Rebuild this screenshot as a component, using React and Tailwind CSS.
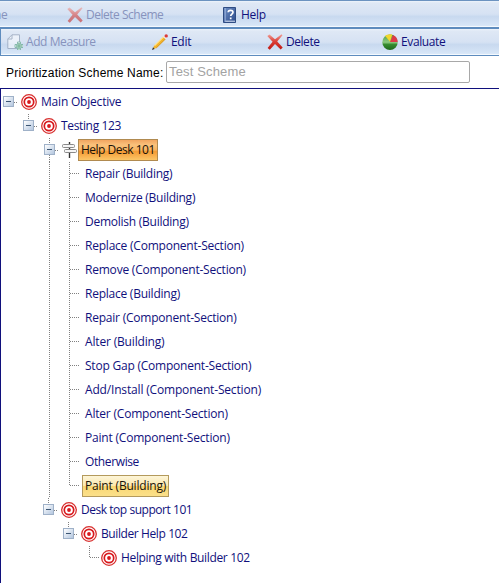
import React from "react";

const vDots = "bg-[repeating-linear-gradient(to_bottom,#808080_0px,#808080_1px,transparent_1px,transparent_2px)]";
const hDots = "bg-[repeating-linear-gradient(to_right,#808080_0px,#808080_1px,transparent_1px,transparent_2px)]";
const barFill = "bg-[linear-gradient(to_bottom,#eef4fb_0px,#dfe8f5_2px,#d6e2f3_50%,#c8d9ef_60%,#d7e6f7_94%,#f4f9fe_97%)]";

function Target() {
  return (
    <svg className="block size-4 shrink-0" viewBox="0 0 16 16">
      <circle cx="8" cy="8" r="7.3" fill="#fff" stroke="#d8302f" strokeWidth="1.3" />
      <circle cx="8" cy="8" r="4.7" fill="#fff" stroke="#d8181c" strokeWidth="1.7" />
      <circle cx="8" cy="8" r="1.9" fill="#d8181c" />
    </svg>
  );
}

function Signpost() {
  return (
    <svg className="block size-4 shrink-0" viewBox="0 0 16 16">
      <path d="M8.500 0v16" stroke="#333" strokeWidth="1.400" />
      <rect x="1.500" y="2.500" width="12" height="3" rx="1" fill="#f6f6f6" stroke="#8a8a8a" />
      <rect x="3.500" y="7.500" width="12" height="3" rx="1" fill="#f6f6f6" stroke="#8a8a8a" />
    </svg>
  );
}

function Cross() {
  return (
    <svg className="block size-4 shrink-0" viewBox="0 0 16 16">
      <defs>
        <linearGradient id="cross" x1="0" y1="0" x2="0" y2="1">
          <stop offset="0" stopColor="#f0a098" />
          <stop offset=".45" stopColor="#dc4038" />
          <stop offset="1" stopColor="#c01812" />
        </linearGradient>
      </defs>
      <path d="M.3 2 2.500.5 8 5.200 14.500.3l1 .9L10.200 7.500l5.500 6-2 2L8 10.100 2.800 15.700.6 14l5-6.300z" fill="url(#cross)" />
    </svg>
  );
}

function Book() {
  return (
    <svg className="block size-4 shrink-0" viewBox="0 0 16 16">
      <defs>
        <linearGradient id="book" x1="0" y1="0" x2="1" y2="1">
          <stop offset="0" stopColor="#6f8fc4" />
          <stop offset="1" stopColor="#2c4c8c" />
        </linearGradient>
      </defs>
      <path d="M1.500.5h12v15h-12z" fill="url(#book)" stroke="#2f4d84" />
      <path d="M3.200 1v14" stroke="#a9c0e6" strokeWidth=".8" />
      <path d="M3.500 14.200h9.500" stroke="#dfe9f8" />
      <path d="M6.200 5.300C6.200 2.700 11 2.600 11 5.200c0 1.800-2.300 1.900-2.300 3.800M8.700 10.400v1.900" fill="none" stroke="#fff" strokeWidth="1.700" />
    </svg>
  );
}

function AddPage() {
  return (
    <svg className="block size-4 shrink-0" viewBox="0 0 16 16">
      <path d="M5 .8h7.500v13.700H.8V5z" fill="#fbfdff" stroke="#7e8ea6" />
      <path d="M5 .8V5H.8" fill="none" stroke="#7e8ea6" />
      <path d="M10.500 8h3v2.500H16v3h-2.500V16h-3v-2.500H8v-3h2.500z" fill="#fff" stroke="#3d9668" strokeWidth=".9" />
      <path d="M12 9v6M9 12h6" stroke="#3f9f58" strokeWidth="1.600" />
    </svg>
  );
}

function Pencil() {
  return (
    <svg className="block size-4 shrink-0" viewBox="0 0 16 16">
      <path d="M.7 15.300 2 11.700 11.500 2.200l2.500 2.500-9.500 9.400z" fill="#f3b52c" />
      <path d="M2.600 11.600 11.800 2.600" stroke="#ffe9a0" strokeWidth="1.100" />
      <path d="M4.300 13.900 13.700 4.700" stroke="#cf8f22" strokeWidth=".8" />
      <path d="M11 2.700l1.800-1.800 2.500 2.500-1.800 1.900z" fill="#e9edf4" />
      <circle cx="14.200" cy="1.900" r="1.700" fill="#dc3a38" />
      <path d="M0 16l1-2.700 1.700 1.700z" fill="#333" />
    </svg>
  );
}

function Pie() {
  return (
    <svg className="block size-4 shrink-0" viewBox="0 0 16 16">
      <defs>
        <linearGradient id="pie" x1="0" y1="0" x2="0" y2="1">
          <stop offset="0" stopColor="#4a9c42" />
          <stop offset=".5" stopColor="#8cca80" />
          <stop offset=".65" stopColor="#358c2f" />
          <stop offset="1" stopColor="#1f6b1d" />
        </linearGradient>
      </defs>
      <circle cx="8" cy="8.200" r="7.700" fill="url(#pie)" />
      <path d="M8 7.800 3 1.800Q6-.4 10.300.5z" fill="#f3d62c" />
      <path d="M8 7.900 11 .9Q15.600 3 15.700 7.900z" fill="#dd3a48" />
    </svg>
  );
}

function Expander() {
  return (
    <span className="flex size-[11px] shrink-0 items-center justify-center border border-[#9fb1c8] bg-linear-to-br from-white to-[#b4c7df]">
      <span className="h-px w-[5px] bg-[#3c5673]" />
    </span>
  );
}

/* One 20px guide column: "blank", "line", "branch", "last" or an expander. */
function Guide({ kind }) {
  if (kind === "blank") return <span className="w-5 shrink-0" />;
  if (kind === "line")
    return (
      <span className="flex h-6 w-5 shrink-0 pl-[10px]">
        <span className={`w-px ${vDots}`} />
      </span>
    );
  if (kind === "branch" || kind === "last")
    return (
      <span className="flex h-6 w-5 shrink-0 pl-[10px]">
        <span className={`w-px ${vDots} ${kind === "last" ? "h-3" : "h-6"}`} />
        <span className={`mt-[11px] h-px w-[9px] ${hDots}`} />
      </span>
    );
  const above = kind !== "root";
  const below = kind === "openMore";
  return (
    <span className={`flex h-6 w-5 shrink-0 items-center ${kind === "openMore" ? "pl-[5px]" : "pl-[4px]"}`}>
      <span className="flex h-6 w-[11px] flex-col items-center">
        <span className={`h-[6px] w-px ${above ? vDots : ""}`} />
        <Expander />
        <span className={`h-[7px] w-px ${below ? vDots : ""}`} />
      </span>
      <span className={`h-px w-1 ${hDots}`} />
    </span>
  );
}

const leaf = ["blank", "blank", "line", "branch"];
const rows = [
  { g: ["root"], icon: "target", text: "Main Objective", t: "tracking-[-0.2px]" },
  { g: ["blank", "open"], icon: "target", text: "Testing 123", t: "tracking-[-0.35px]" },
  { g: ["blank", "blank", "openMore"], icon: "sign", text: "Help Desk 101", t: "tracking-[-0.5px]", box: "hot" },
  { g: leaf, text: "Repair (Building)", t: "tracking-[-0.26px]" },
  { g: leaf, text: "Modernize (Building)", t: "tracking-[-0.26px]" },
  { g: leaf, text: "Demolish (Building)", t: "tracking-[-0.25px]" },
  { g: leaf, text: "Replace (Component-Section)", t: "tracking-[-0.22px]" },
  { g: leaf, text: "Remove (Component-Section)", t: "tracking-[-0.21px]" },
  { g: leaf, text: "Replace (Building)", t: "tracking-[-0.24px]" },
  { g: leaf, text: "Repair (Component-Section)", t: "tracking-[-0.22px]" },
  { g: leaf, text: "Alter (Building)", t: "tracking-[-0.17px]" },
  { g: leaf, text: "Stop Gap (Component-Section)", t: "tracking-[-0.22px]" },
  { g: leaf, text: "Add/Install (Component-Section)", t: "tracking-[-0.17px]" },
  { g: leaf, text: "Alter (Component-Section)", t: "tracking-[-0.2px]" },
  { g: leaf, text: "Paint (Component-Section)", t: "tracking-[-0.2px]" },
  { g: leaf, text: "Otherwise", t: "tracking-[-0.38px]" },
  { g: ["blank", "blank", "line", "last"], text: "Paint (Building)", t: "tracking-[-0.19px]", box: "warm" },
  { g: ["blank", "blank", "open"], icon: "target", text: "Desk top support 101", t: "tracking-[-0.46px]" },
  { g: ["blank", "blank", "blank", "open"], icon: "target", text: "Builder Help 102", t: "tracking-[-0.4px]" },
  { g: ["blank", "blank", "blank", "blank", "last"], icon: "target", text: "Helping with Builder 102", t: "tracking-[-0.34px]" },
];

const boxes = {
  hot: "border-[#b08a50] bg-[linear-gradient(to_bottom,#f2a560_0%,#fac27c_25%,#f9b35e_50%,#f59b35_58%,#fcc668_100%)] text-[#1a1208]",
  warm: "border-[#b49a5c] bg-[linear-gradient(to_bottom,#fdf5d8_0%,#fbe8ae_48%,#f9d774_52%,#fbe08a_100%)] text-[#1a1208]",
};

function Row({ g, icon, text, t, box }) {
  return (
    <li className="flex h-6 items-center">
      {g.map((kind, i) => (
        <Guide key={i} kind={kind} />
      ))}
      {icon && (
        <span className="flex w-5 shrink-0 justify-center">
          {icon === "target" ? <Target /> : <Signpost />}
        </span>
      )}
      <span
        className={`flex h-[22px] items-center whitespace-nowrap border px-[2px] ${icon ? "-ml-px" : "ml-[3px]"} ${t} ${box ? boxes[box] : "border-transparent"}`}
      >
        {text}
      </span>
    </li>
  );
}

function Tool({ icon, text, pad, gap, t, off }) {
  return (
    <span className={`flex items-center whitespace-nowrap ${pad} ${gap}`}>
      {icon && <span className={off ? "opacity-55" : ""}>{icon}</span>}
      <span className={`${t} ${off ? "text-[#8793bd]" : "text-[#10107c]"}`}>{text}</span>
    </span>
  );
}

export default function App() {
  return (
    <div className="flex h-[583px] w-[499px] flex-col overflow-hidden bg-white font-['Open_Sans','Noto_Sans',sans-serif] text-[12px] leading-4 text-[#10107c]">
      <div className={`flex h-[27px] shrink-0 border-t border-[#6c93c0] pt-px ${barFill}`}>
        <Tool text="ne" off pad="w-[67px] -ml-[6px]" gap="" t="tracking-[-0.35px]" />
        <Tool icon={<Cross />} off text="Delete Scheme" pad="w-[155px] ml-[6px]" gap="gap-[3px]" t="tracking-[-0.48px]" />
        <Tool icon={<Book />} text="Help" pad="" gap="gap-[3px]" t="tracking-[-0.25px]" />
      </div>
      <div className={`flex h-[29px] shrink-0 border-y border-t-2 border-l border-[#5e8cbe] ${barFill}`}>
        <Tool icon={<AddPage />} off text="Add Measure" pad="w-[151px] pl-[6px]" gap="gap-[3px]" t="tracking-[-0.42px]" />
        <Tool icon={<Pencil />} text="Edit" pad="w-[115px]" gap="gap-[3px]" t="tracking-[-0.3px]" />
        <Tool icon={<Cross />} text="Delete" pad="w-[115px]" gap="gap-[3px]" t="tracking-[-0.45px]" />
        <Tool icon={<Pie />} text="Evaluate" pad="" gap="gap-[3px]" t="tracking-[-0.38px]" />
      </div>
      <div className="flex h-8 shrink-0 items-center pl-[6px] font-['Liberation_Sans',Arial,sans-serif] text-[12px] text-black">
        <span className="w-[160px] whitespace-nowrap pt-[2px] tracking-[0.2px]">Prioritization Scheme Name:</span>
        <div className="flex h-[22px] w-[304px] items-center rounded-[2px] border border-[#a8a8a8] pl-[2px] text-[13px] tracking-[0.15px] text-[#a3a3a3]">
          Test Scheme
        </div>
      </div>
      <ul className="grow border-t border-l border-[#10107c] pt-px">
        <div className="-ml-[2px]">
          {rows.map((r) => (
            <Row key={r.text} {...r} />
          ))}
        </div>
      </ul>
    </div>
  );
}
